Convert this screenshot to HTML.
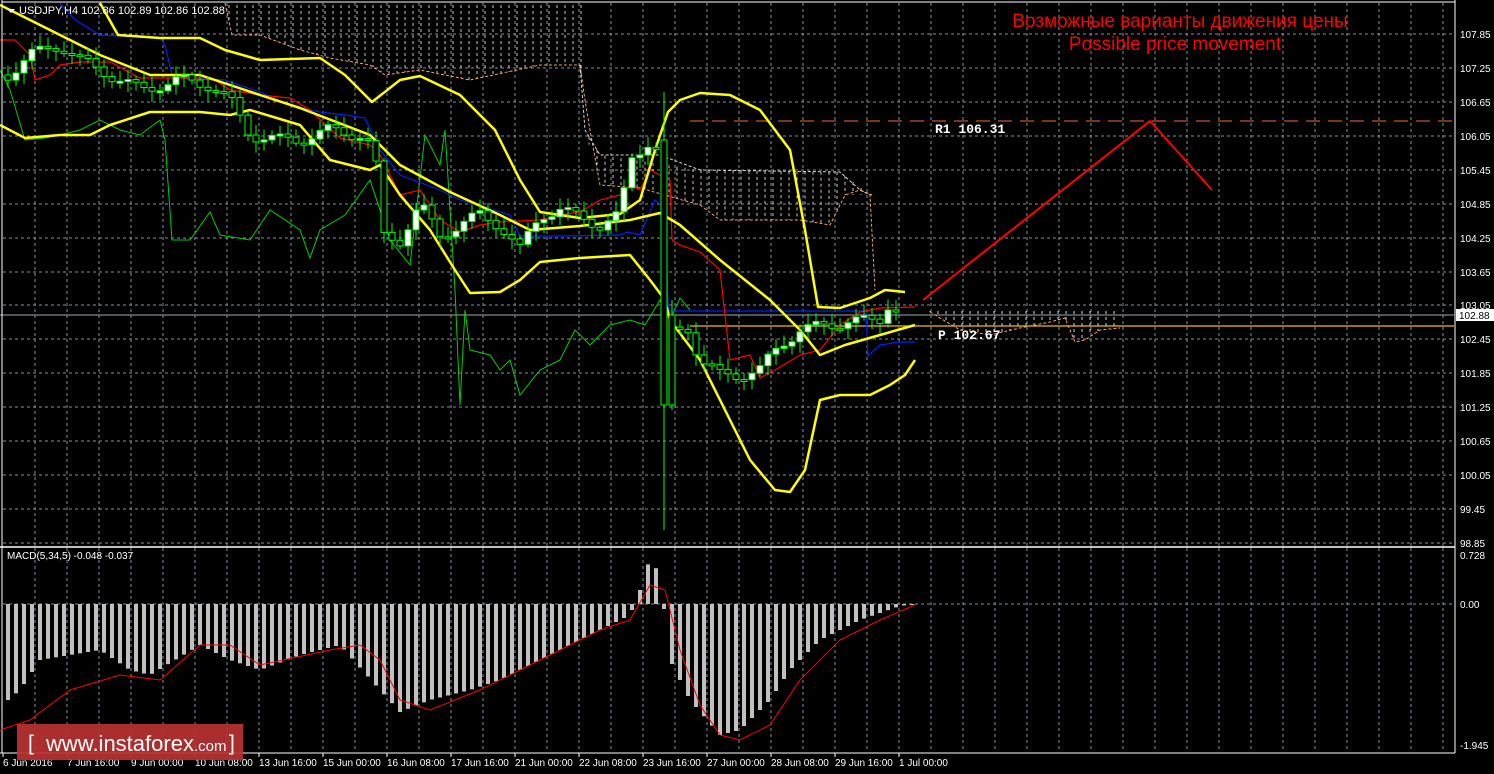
<!DOCTYPE html>
<html><head><meta charset="utf-8"><style>
html,body{margin:0;padding:0;background:#000;width:1494px;height:774px;overflow:hidden}
svg{display:block}
text{font-family:"Liberation Sans",sans-serif}
</style></head><body>
<svg id="s" width="1494" height="774" xmlns="http://www.w3.org/2000/svg">
<rect width="1494" height="774" fill="#000"/>
<g id="grid" stroke="#8090a0" stroke-width="1" stroke-dasharray="3,3"></g>
<g id="cloud" stroke="#e8d8d0" stroke-width="1" stroke-dasharray="3,3" opacity="0.9"></g>
<polyline fill="none" stroke="#f0a070" stroke-width="1" stroke-dasharray="3,2" points="225,3 232,35 260,35 300,50 330,58 370,65 385,75 420,70 470,80 540,65 580,65 585,100 590,130 600,185 640,188 700,205 720,220 800,220 830,225 845,195 860,190 870,195 875,290"/>
<polyline fill="none" stroke="#e0d0d0" stroke-width="1" stroke-dasharray="3,2" points="580,65 585,130 600,155 640,155 660,155 700,170 840,172 860,190 872,195"/>
<polyline fill="none" stroke="#f0a070" stroke-width="1" stroke-dasharray="3,2" points="930,312 960,330 990,335 1020,328 1050,322 1065,318 1075,342 1085,340 1100,330 1120,328"/>
<g id="cloud2" stroke="#e0d0d0" stroke-width="1" stroke-dasharray="3,3"></g>
<line x1="690" y1="121" x2="1454" y2="121" stroke="#f06a30" stroke-width="1" stroke-dasharray="14,8"/>
<line x1="0" y1="315" x2="1454" y2="315" stroke="#a0a8b0" stroke-width="1"/>
<line x1="690" y1="326" x2="1454" y2="326" stroke="#f0c000" stroke-width="1.3"/>
<text x="935" y="133" fill="#fff" font-size="13" font-weight="bold" style="font-family:'Liberation Mono',monospace">R1  106.31</text>
<text x="938" y="339" fill="#fff" font-size="13" font-weight="bold" style="font-family:'Liberation Mono',monospace">P  102.67</text>
<polyline fill="none" stroke="#00d000" stroke-width="1" points="0,70 10,90 25,140 45,138 60,135 80,130 100,120 120,130 140,135 160,120 165,140 172,240 190,240 210,212 220,235 250,240 270,210 300,230 310,258 320,230 345,215 370,180 390,240 410,265 425,135 440,165 445,130 455,290 460,405 465,310 470,350 490,355 500,370 510,360 520,395 540,370 560,360 575,330 590,345 610,325 630,320 645,325 660,300 670,320 680,298 690,310"/>
<polyline fill="none" stroke="#0020ff" stroke-width="1.2" points="60,3 75,20 100,35 160,38 165,45 172,75 200,78 225,80 230,82 260,92 290,105 320,112 345,115 365,118 380,150 400,175 440,190 460,200 510,215 520,236 560,236 620,235 628,232 640,235 655,200 665,208 668,305 670,311 730,311 820,311 866,311 868,356 880,345 900,342 915,342"/>
<polyline fill="none" stroke="#ff0000" stroke-width="1.2" points="0,40 15,40 30,55 35,80 50,75 60,65 80,62 110,62 140,78 180,78 215,80 230,90 260,95 290,98 310,110 340,138 370,145 380,155 400,195 420,190 440,220 460,232 480,225 500,222 540,220 560,215 580,212 600,200 620,195 630,185 640,190 650,170 670,180 672,240 680,245 700,252 720,270 730,360 750,355 760,378 775,370 800,355 820,350 840,325 860,312 880,308 915,307"/>
<g fill="none" stroke="#ffff00" stroke-width="2.5" stroke-linejoin="round">
<polyline points="100,3 118,35 160,38 200,38 225,50 260,60 320,58 345,75 372,102 400,80 420,76 460,95 495,130 520,180 540,212 580,218 620,214 640,200 655,150 668,112 680,100 700,93 730,95 760,110 790,150 805,230 818,307 840,308 870,298 885,290 905,292"/>
<polyline points="0,5 40,25 100,55 150,75 200,75 260,95 300,108 370,135 400,165 450,192 500,215 530,230 580,226 630,220 660,213 680,225 720,260 770,300 800,330 820,355 845,345 880,335 915,325"/>
<polyline points="0,125 25,138 60,135 90,135 110,125 150,112 200,112 230,115 250,110 300,125 330,160 370,170 380,165 400,195 430,230 455,270 470,293 500,292 520,280 540,262 580,258 630,255 650,280 665,300 670,320 700,360 720,400 750,460 775,490 790,492 805,470 820,400 840,395 870,395 890,385 905,375 915,360"/>
</g>
<g id="candles"></g>
<polyline fill="none" stroke="#ff0000" stroke-width="2" points="923,300 1150,121 1212,190"/>
<text x="1180" y="27" fill="#ff0000" font-size="19" text-anchor="middle">Возможные варианты движения цены</text>
<text x="1175" y="50" fill="#ff0000" font-size="19" text-anchor="middle">Possible price movement</text>
<polygon points="7,9 15,9 11,13" fill="#fff"/>
<text x="19" y="14" fill="#fff" font-size="11">USDJPY,H4  102.86 102.89 102.86 102.88</text>
<line x1="0" y1="547" x2="1455" y2="547" stroke="#fff" stroke-width="1.5"/>
<line x1="2" y1="0" x2="2" y2="753" stroke="#fff" stroke-width="1"/>
<line x1="1455" y1="0" x2="1455" y2="753" stroke="#fff" stroke-width="1"/>
<line x1="0" y1="753" x2="1455" y2="753" stroke="#fff" stroke-width="1"/>
<line x1="2" y1="2" x2="1455" y2="2" stroke="#fff" stroke-width="1"/>
<g id="hist" fill="#c0c0c0"></g>
<polyline fill="none" stroke="#ff0000" stroke-width="1" points="0,730 30,720 70,690 120,675 160,680 200,645 230,645 260,665 330,650 360,645 380,660 400,700 430,710 480,690 520,670 560,650 600,630 630,620 650,585 665,590 680,650 700,705 720,735 740,740 770,725 800,680 840,640 880,620 915,605"/>
<text x="7" y="559" fill="#fff" font-size="10">MACD(5,34,5) -0.048 -0.037</text>
<g id="ax" fill="#fff" font-size="10"></g>
<rect x="1456" y="309" width="38" height="12" fill="#fff"/>
<text x="1459" y="319" fill="#000" font-size="10">102.88</text>
<rect x="17" y="724" width="226" height="36" fill="#b83232" opacity="0.92"/>
<text x="28" y="750" fill="#fff" font-size="21">[</text>
<text x="46" y="751" fill="#fff" font-size="22">www.instaforex<tspan font-size="15">.com</tspan></text>
<text x="229" y="750" fill="#fff" font-size="21">]</text>
</svg>
<script>
(function(){
var NS="http://www.w3.org/2000/svg";
function el(p,t,a,txt){var e=document.createElementNS(NS,t);for(var k in a)e.setAttribute(k,a[k]);if(txt)e.textContent=txt;document.getElementById(p).appendChild(e);return e;}
var x,i,y;
for(x=35;x<1455;x+=32){el('grid','line',{x1:x,y1:3,x2:x,y2:546});el('grid','line',{x1:x,y1:548,x2:x,y2:752});}
var prices=["107.85","107.25","106.65","106.05","105.45","104.85","104.25","103.65","103.05","102.45","101.85","101.25","100.65","100.05","99.45","98.85"];
for(i=0;i<16;i++){y=Math.round(34+i*33.93);el('grid','line',{x1:3,y1:y,x2:1454,y2:y});el('ax','text',{x:1460,y:y+4},prices[i]);}
el('grid','line',{x1:3,y1:604,x2:1454,y2:604});
el('ax','text',{x:1460,y:559},"0.728");el('ax','text',{x:1460,y:608},"0.00");el('ax','text',{x:1460,y:749},"-1.945");
var d=["6 Jun 2016","7 Jun 16:00","9 Jun 00:00","10 Jun 08:00","13 Jun 16:00","15 Jun 00:00","16 Jun 08:00","17 Jun 16:00","21 Jun 00:00","22 Jun 08:00","23 Jun 16:00","27 Jun 00:00","28 Jun 08:00","29 Jun 16:00","1 Jul 00:00"];
for(i=0;i<d.length;i++){el('ax','text',{x:3+i*64,y:766},d[i]);el('ax','line',{x1:3+i*64,y1:753,x2:3+i*64,y2:757,stroke:'#fff'});}
function interp(pts,x){for(var j=0;j<pts.length-1;j++){if(x>=pts[j][0]&&x<=pts[j+1][0]){var t=(x-pts[j][0])/(pts[j+1][0]-pts[j][0]);return pts[j][1]+t*(pts[j+1][1]-pts[j][1]);}}return pts[pts.length-1][1];}
var cbot=[[225,3],[232,35],[260,35],[300,50],[330,58],[370,65],[385,75],[420,70],[470,80],[540,65],[580,65],[585,130],[600,185],[640,188],[700,205],[720,220],[800,220],[830,225],[845,195],[870,195]];
var ctop2=[[580,3],[585,130],[600,155],[700,170],[840,172],[870,195]];
for(x=229;x<870;x+=8){var a=5,b=interp(cbot,x);if(x>=582){var t2=interp(ctop2,x);a=Math.min(t2,b);b=Math.max(t2,b);}if(b-a>3)el('cloud','line',{x1:x,y1:a,x2:x,y2:b});}
for(x=930;x<1122;x+=8){el('cloud2','line',{x1:x,y1:311,x2:x,y2:interp([[930,312],[960,330],[990,335],[1020,328],[1065,318],[1075,342],[1100,330],[1120,328]],x)});}
var path=[[8,75],[30,55],[60,45],[80,60],[110,75],[140,90],[180,80],[210,85],[230,100],[250,135],[280,140],[300,140],[330,130],[360,135],[375,150],[380,235],[400,240],[420,205],[440,235],[460,225],[480,215],[500,225],[520,250],[540,215],[560,210],[600,225],[620,215],[630,160],[650,140],[660,155],[665,315],[675,340],[685,320],[700,360],[720,375],[740,375],[760,370],[780,345],[800,330],[830,325],[850,320],[870,322],[880,320],[890,300],[900,315]];
var prev=interp(path,8);
for(x=8;x<=902;x+=8){var c=interp(path,x)+Math.sin(x*1.7)*6;var o=prev;prev=c;
 var hi=Math.min(o,c)-3-Math.abs(Math.sin(x*0.9))*8,lo=Math.max(o,c)+3+Math.abs(Math.cos(x*1.3))*8;
 if(x==664){hi=92;lo=530;o=140;c=405;}if(x==672){hi=300;lo=410;o=315;c=405;}
 el('candles','line',{x1:x,y1:hi,x2:x,y2:lo,stroke:'#00ff00','stroke-width':1});
 var bt=Math.min(o,c),h=Math.max(2,Math.abs(o-c));
 el('candles','rect',{x:x-3,y:bt,width:6,height:h,fill:(c<o)?'#fff':'#000',stroke:'#00ff00','stroke-width':1});}
var hp=[[8,700],[20,690],[40,660],[100,650],[130,670],[150,675],[200,645],[230,660],[260,670],[300,655],[340,645],[380,690],[400,712],[430,700],[470,690],[500,680],[520,670],[560,650],[600,630],[630,615],[640,590],[650,558],[660,575],[670,660],[690,700],[720,735],[740,730],[770,700],[790,670],[820,640],[860,620],[900,606],[915,604]];
for(x=8;x<=915;x+=8){var v=interp(hp,x);var y1=Math.min(604,v),y2=Math.max(604,v);el('hist','rect',{x:x-2,y:y1,width:4,height:Math.max(1,y2-y1)});}
})();
</script>
</body></html>
